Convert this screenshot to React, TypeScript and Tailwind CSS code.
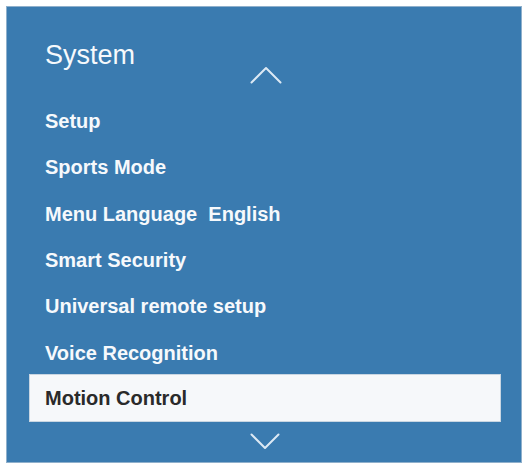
import React from "react";

const items = [
  "Setup",
  "Sports Mode",
  "Menu Language\u00a0\u00a0English",
  "Smart Security",
  "Universal remote setup",
  "Voice Recognition",
];

export default function App() {
  return (
    <div
      className="w-[526px] h-[465px] bg-white pt-[6px] pl-[6px]"
      style={{ fontFamily: '"Liberation Sans", Arial, sans-serif' }}
    >
      <div className="w-[516px] h-[457px] border border-[#8fb0cc] bg-[#3a7bb0] flex flex-col">
        <div className="h-[91px] flex flex-col">
          <div className="pl-[38px] pt-[35px] text-[27px] leading-[27px] text-[#f6f9fc]">
            System
          </div>
          <div className="flex justify-center -mt-[3px] pl-[4px]">
            <svg width="32" height="18" viewBox="0 0 32 18" fill="none">
              <path
                d="M1.5 16.5 L16 2 L30.5 16.5"
                stroke="#dce9f4"
                strokeWidth="2"
                strokeLinecap="round"
                strokeLinejoin="round"
              />
            </svg>
          </div>
        </div>
        {items.map((t) => (
          <div
            key={t}
            className="h-[46.33px] flex items-center pl-[38px] text-[20px] leading-[20px] font-bold text-[#f6f9fc] whitespace-pre"
          >
            {t}
          </div>
        ))}
        <div className="ml-[22px] w-[472px] h-[48px] -mt-[2px] flex items-center pl-[15px] bg-[#f6f8fa] border border-[#c9d6e2] text-[20px] leading-[20px] font-bold text-[#2a2a2a]">
          Motion Control
        </div>
        <div className="flex justify-center mt-[11px] pl-[2px]">
          <svg width="30" height="17" viewBox="0 0 30 17" fill="none">
            <path
              d="M1.5 1.5 L15 15 L28.5 1.5"
              stroke="#dce9f4"
              strokeWidth="2"
              strokeLinecap="round"
              strokeLinejoin="round"
            />
          </svg>
        </div>
      </div>
    </div>
  );
}
